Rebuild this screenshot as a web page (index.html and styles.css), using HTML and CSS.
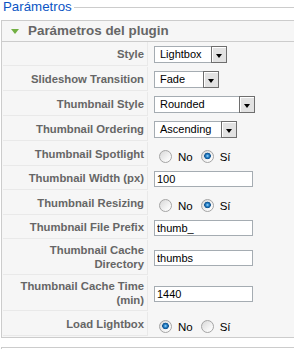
FILE: index.html
```html
<!DOCTYPE html>
<html lang="es">
<head>
    <meta charset="UTF-8">
    <title>Parámetros</title>
    <link rel="stylesheet" href="styles.css">
</head>
<body>
    <div class="params-legend"><span>Parámetros</span></div>

    <div class="pane">
        <h3 class="pane-title"><span class="pane-arrow"></span>Parámetros del plugin</h3>
        <table class="paramlist">
            <tr>
                <td class="key">Style</td>
                <td class="value">
                    <span class="select sel-style"><span class="select-text">Lightbox</span><span class="select-btn"></span></span>
                </td>
            </tr>
            <tr>
                <td class="key">Slideshow Transition</td>
                <td class="value">
                    <span class="select sel-transition"><span class="select-text">Fade</span><span class="select-btn"></span></span>
                </td>
            </tr>
            <tr>
                <td class="key">Thumbnail Style</td>
                <td class="value">
                    <span class="select sel-thumbstyle"><span class="select-text">Rounded</span><span class="select-btn"></span></span>
                </td>
            </tr>
            <tr>
                <td class="key">Thumbnail Ordering</td>
                <td class="value">
                    <span class="select sel-ordering"><span class="select-text">Ascending</span><span class="select-btn"></span></span>
                </td>
            </tr>
            <tr>
                <td class="key">Thumbnail Spotlight</td>
                <td class="value">
                    <span class="radios">
                        <input type="radio" name="spotlight" id="spot0"><label for="spot0">No</label>
                        <input type="radio" name="spotlight" id="spot1" checked><label for="spot1">Sí</label>
                    </span>
                </td>
            </tr>
            <tr>
                <td class="key">Thumbnail Width (px)</td>
                <td class="value"><input class="text" type="text" value="100"></td>
            </tr>
            <tr>
                <td class="key">Thumbnail Resizing</td>
                <td class="value">
                    <span class="radios">
                        <input type="radio" name="resizing" id="res0"><label for="res0">No</label>
                        <input type="radio" name="resizing" id="res1" checked><label for="res1">Sí</label>
                    </span>
                </td>
            </tr>
            <tr>
                <td class="key">Thumbnail File Prefix</td>
                <td class="value"><input class="text" type="text" value="thumb_"></td>
            </tr>
            <tr>
                <td class="key">Thumbnail Cache Directory</td>
                <td class="value"><input class="text" type="text" value="thumbs"></td>
            </tr>
            <tr>
                <td class="key">Thumbnail Cache Time (min)</td>
                <td class="value"><input class="text" type="text" value="1440"></td>
            </tr>
            <tr>
                <td class="key">Load Lightbox</td>
                <td class="value">
                    <span class="radios">
                        <input type="radio" name="lightbox" id="lb0" checked><label for="lb0">No</label>
                        <input type="radio" name="lightbox" id="lb1"><label for="lb1">Sí</label>
                    </span>
                </td>
            </tr>
        </table>
    </div>

    <div class="pane pane-next"></div>
</body>
</html>
```

FILE: styles.css
```css
* {
    box-sizing: border-box;
}

body {
    margin: 0;
    overflow: hidden;
    background: #fff;
    font-family: "Liberation Sans", Arial, sans-serif;
}

/* fieldset legend with the rule running to the right */
.params-legend {
    display: flex;
    align-items: center;
    height: 14px;
    padding-left: 3px;
}

.params-legend span {
    color: #0b55c4;
    font-size: 13.3px;
    line-height: 14px;
}

.params-legend::after {
    content: "";
    flex: 1;
    border-top: 1px solid #ccc;
    margin-left: 2px;
}

.pane {
    width: 293px;
    margin: 6px 0 0 1px;
    border: 1px solid #ccc;
    border-right: 0;
    background: #f6f6f6;
}

.pane-title {
    margin: 0;
    height: 21px;
    padding-left: 9px;
    border-bottom: 1px solid #ccc;
    display: flex;
    align-items: center;
    color: #666;
    font-size: 13.4px;
    font-weight: bold;
    line-height: 20px;
}

.pane-arrow {
    width: 0;
    height: 0;
    margin-right: 9px;
    border-left: 4px solid transparent;
    border-right: 4px solid transparent;
    border-top: 5px solid #72b043;
}

.paramlist {
    width: 100%;
    border-spacing: 1px;
    margin-top: -1px;
}

.paramlist td {
    padding: 4px 5px 3px;
    vertical-align: middle;
}

.paramlist td.key {
    width: 145px;
    padding: 3px 3px 3px 8px;
    text-align: right;
    color: #666;
    font-size: 11.3px;
    font-weight: bold;
    line-height: 14px;
    border-bottom: 1px solid #e9e9e9;
    border-right: 1px solid #e9e9e9;
}

/* fake windows style dropdowns */
.select {
    display: flex;
    height: 17px;
    background: #fff;
    border: 1px solid #a5acb2;
    font-size: 11px;
    color: #000;
}

.select-text {
    flex: 1;
    padding-left: 5px;
    line-height: 15px;
}

.select-btn {
    width: 16px;
    margin: -1px -1px -1px 0;
    border: 1px solid #6e6e6e;
    box-shadow: inset 1px 1px #fff;
    background: #e2e2e2;
    display: flex;
    align-items: center;
    justify-content: center;
}

.select-btn::after {
    content: "";
    margin-top: 3px;
    border-left: 3.5px solid transparent;
    border-right: 3.5px solid transparent;
    border-top: 4px solid #000;
}

.sel-style { width: 73px; }
.sel-transition { width: 65px; }
.sel-thumbstyle { width: 101px; }
.sel-ordering { width: 83px; }

.text {
    display: block;
    width: 99px;
    height: 16px;
    margin: 0;
    padding: 0 2px;
    border: 1px solid #a5acb2;
    font-family: "Liberation Sans", Arial, sans-serif;
    font-size: 11px;
    color: #000;
    background: #fff;
}

.radios {
    display: flex;
    align-items: center;
    height: 17px;
    padding-top: 4px;
    font-size: 11.5px;
    color: #000;
}

.radios input {
    appearance: none;
    width: 13px;
    height: 13px;
    margin: 0 6px 0 0;
    border: 1px solid #a4a4a4;
    border-radius: 50%;
    background: linear-gradient(135deg, #d8d8d8 0%, #f7f7f7 70%, #fff 100%);
}

.radios input:first-child {
    margin-left: 5px;
}

.radios input:checked {
    background:
        radial-gradient(circle at 50% 45%, #a8dcff 0, #2a86cc 1.5px, #0d4f8c 3px, rgba(13, 79, 140, 0) 3.6px),
        linear-gradient(135deg, #d8d8d8 0%, #f7f7f7 70%, #fff 100%);
}

.radios label {
    margin-right: 8px;
}

.pane-next {
    height: 2px;
    margin-top: 9px;
    border-bottom: 0;
    background: #fff;
}
```
